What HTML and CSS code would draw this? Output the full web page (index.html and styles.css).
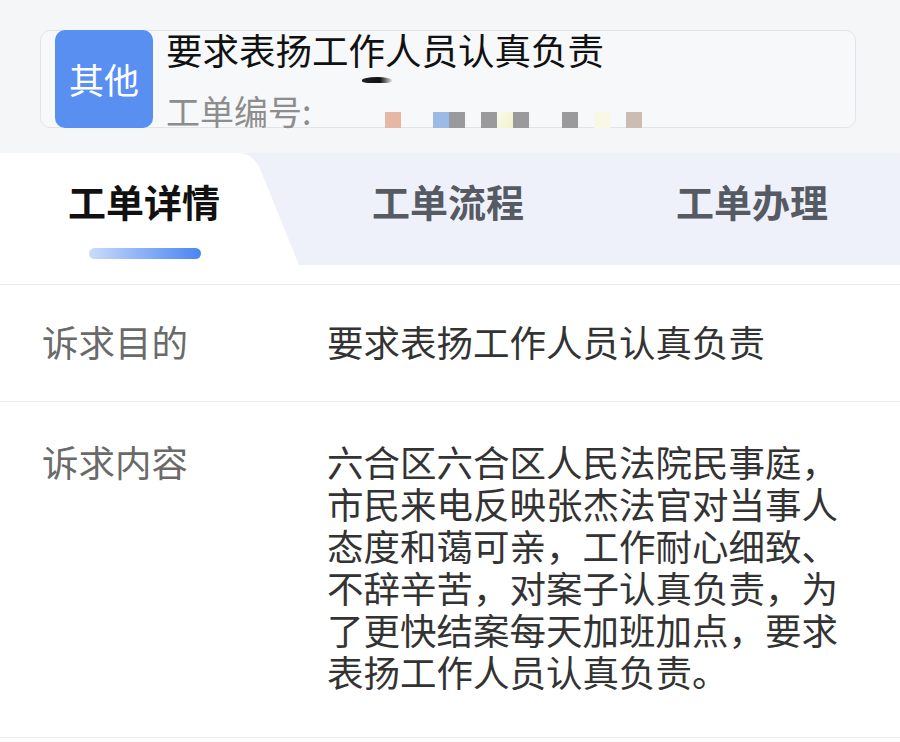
FILE: index.html
```html
<!DOCTYPE html>
<html lang="zh-CN">
<head>
<meta charset="utf-8">
<title>工单详情</title>
<link rel="stylesheet" href="styles.css">
</head>
<body>
<div class="page">
  <header class="header">
    <div class="card">
      <div class="badge">其他</div>
      <div class="info">
        <div class="title">要求表扬工作人员认真负责</div>
        <div class="code">
          <span class="code-label">工单编号:</span>
          <span class="mosaic">
            <i class="m m-peach"></i>
            <i class="m m-blue"></i>
            <i class="m m-gray"></i>
            <i class="m m-gap"></i>
            <i class="m m-gray"></i>
            <i class="m m-yellow"></i>
            <i class="m m-gray"></i>
            <i class="m m-gap2"></i>
            <i class="m m-gray"></i>
            <i class="m m-gap"></i>
            <i class="m m-pale"></i>
            <i class="m m-gap"></i>
            <i class="m m-tan"></i>
          </span>
        </div>
        <span class="smudge"></span>
      </div>
    </div>
  </header>

  <nav class="tabs">
    <div class="tab active">
      <span class="tab-text">工单详情</span>
      <span class="indicator"></span>
    </div>
    <div class="tab"><span class="tab-text">工单流程</span></div>
    <div class="tab"><span class="tab-text">工单办理</span></div>
  </nav>
  <div class="tabs-gap"></div>

  <section class="details">
    <div class="row row-first">
      <div class="label">诉求目的</div>
      <div class="value">要求表扬工作人员认真负责</div>
    </div>
    <div class="row row-second">
      <div class="label">诉求内容</div>
      <div class="value">六合区六合区人民法院民事庭，市民来电反映张杰法官对当事人态度和蔼可亲，工作耐心细致、不辞辛苦，对案子认真负责，为了更快结案每天加班加点，要求表扬工作人员认真负责。</div>
    </div>
  </section>
</div>
</body>
</html>
```

FILE: styles.css
```css
* { box-sizing: border-box; }

html, body {
  margin: 0;
  padding: 0;
  background: #ffffff;
}

body {
  font-family: "Noto Sans CJK SC", "Noto Sans", "Liberation Sans", sans-serif;
  width: 900px;
  height: 742px;
  overflow: hidden;
}

.header {
  background: #f5f6f8;
  padding: 30px 44px 25px 40px;
}

.card {
  display: flex;
  height: 98px;
  border: 1px solid #e2e4e8;
  border-radius: 10px;
  background: #f7f8fa;
  padding-left: 14px;
  gap: 13px;
}

.badge {
  flex: 0 0 98px;
  height: 98px;
  margin-top: -1px;
  background: #5a8ff2;
  border-radius: 10px;
  color: #ffffff;
  font-size: 35px;
  line-height: 98px;
  text-align: center;
}

.info {
  position: relative;
  display: flex;
  flex-direction: column;
  justify-content: space-between;
  padding-top: 1px;
  height: 97px;
}

.title {
  font-size: 36.5px;
  line-height: 36px;
  color: #111111;
  white-space: nowrap;
}

.code {
  display: flex;
  align-items: flex-end;
  height: 34px;
}

.code-label {
  font-size: 34px;
  line-height: 34px;
  color: #8d8d8d;
  white-space: nowrap;
}

.mosaic {
  display: flex;
  align-items: flex-end;
  margin-left: 74px;
  padding-bottom: 0;
}

.m {
  display: block;
  width: 16px;
  height: 16px;
}
.m-peach { background: #e6b7a4; margin-right: 32px; }
.m-blue { background: #9bbbe6; }
.m-gray { background: #9a9a9c; }
.m-gap { width: 16px; }
.m-gap2 { width: 33px; }
.m-yellow { background: linear-gradient(120deg, #fafae8 0%, #f3f1cf 100%); }
.m-pale { background: #f8f8e4; }
.m-tan { background: #ccbdb4; }

.smudge {
  position: absolute;
  left: 196px;
  top: 46px;
  width: 30px;
  height: 6px;
  border-radius: 50% 50% 30% 30%;
  background: linear-gradient(90deg, #222 0%, #111 60%, rgba(0,0,0,0.1) 100%);
}

.tabs {
  display: grid;
  grid-template-columns: 300px 300px 300px;
  height: 112px;
  background: #eef0fa;
}

.tab {
  position: relative;
  display: flex;
  flex-direction: column;
  align-items: center;
  padding-top: 29px;
}

.tab.active::before {
  content: "";
  position: absolute;
  left: 0;
  top: 0;
  width: 300px;
  height: 112px;
  background: #ffffff;
  clip-path: path('M0 0 H238 Q254 0 261 18 L299 112 H0 Z');
}

.tab-text {
  position: relative;
  font-size: 38px;
  line-height: 38px;
  font-weight: 700;
  color: #555a63;
  white-space: nowrap;
}

.tab.active .tab-text { color: #111111; margin-right: 12px; }
.tab:nth-child(2) .tab-text { margin-right: 4px; }
.tab:nth-child(3) .tab-text { margin-left: 4px; }

.indicator {
  position: relative;
  display: block;
  width: 112px;
  height: 11px;
  margin-top: 28px;
  margin-right: 10px;
  border-radius: 6px;
  background: linear-gradient(90deg, #cadcfb 0%, #8fb3f7 45%, #4a85f3 100%);
}

.tabs-gap {
  height: 20px;
  border-bottom: 1px solid #ebebeb;
}

.row {
  display: grid;
  grid-template-columns: 285px 525px;
  padding-left: 42px;
  border-bottom: 1px solid #ebebeb;
  font-size: 36.5px;
  line-height: 42px;
}

.row-first { padding-top: 36px; padding-bottom: 38px; }
.row-second { padding-top: 39px; padding-bottom: 44px; }

.label { color: #6a6a6a; white-space: nowrap; }
.value { color: #333333; }
```
